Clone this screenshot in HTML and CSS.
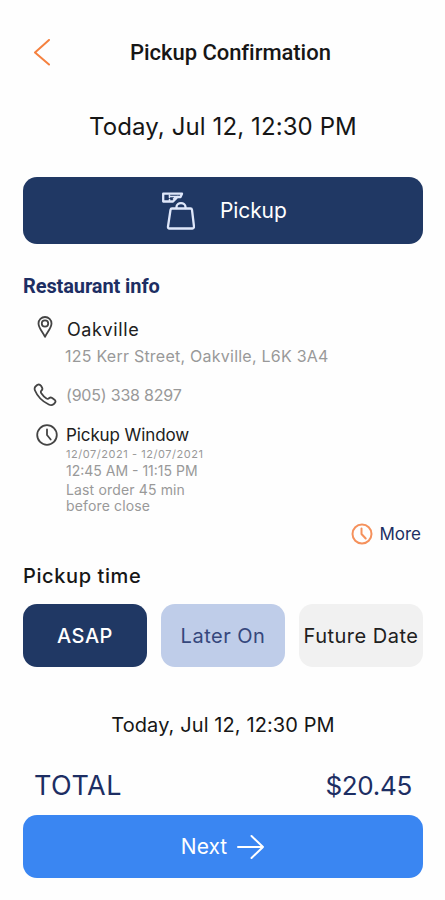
FILE: index.html
```html
<!DOCTYPE html>
<html lang="en">
<head>
  <meta charset="UTF-8" />
  <meta name="viewport" content="width=device-width, initial-scale=1" />
  <title>Pickup Confirmation</title>
  <link rel="stylesheet" href="styles.css">
</head>
<body>
  <header class="top-bar">
    <button class="back-btn" aria-label="Back">
      <svg width="18" height="28" viewBox="0 0 18 28"><path d="M16 1L2 13.500L16 25.500" /></svg>
    </button>
    <h1>Pickup Confirmation</h1>
  </header>

  <main>
    <p class="date-large"><span>Today, Jul 12, 12:30 PM</span></p>

    <button class="pickup-btn">
      <svg class="bag-icon" width="34" height="40" viewBox="0 0 34 40">
        <path d="M2.200 2.700H21L19.500 6H16.500L12 10.500H2.200Z" />
        <path class="fingers" d="M8.500 4V6.500M8.500 8.500V9.500M10 5.500H17M12.500 8L15 5.500" />
        <path d="M15.500 17V16C15.500 10.800 24.500 10.800 24.500 16V17" />
        <path d="M11 17.500H29.500Q30.800 17.500 31 18.800L33 35.500Q33 37.500 31.500 37.500H8.500Q6.800 37.500 7 35.500L9.500 18.800Q9.700 17.500 11 17.500Z" />
      </svg>
      <span>Pickup</span>
    </button>

    <!-- Restaurant info -->
    <h2 class="info-title">Restaurant info</h2>
    <section class="info">
      <div class="info-row place">
        <svg class="pin-icon" width="16" height="22" viewBox="0 0 16 22">
          <path d="M8 20.800C6 16.500 1.500 12 1.500 7.500A6.500 6.500 0 0 1 14.500 7.500C14.500 12 10 16.500 8 20.800Z" />
          <circle cx="8" cy="7.500" r="3.200" />
        </svg>
        <div>
          <p class="name oakville">Oakville</p>
          <p class="address">125 Kerr Street, Oakville, L6K 3A4</p>
        </div>
      </div>
      <div class="info-row phone">
        <svg class="phone-icon" width="24" height="24" viewBox="0 0 24 24">
          <path d="M2.500 3.500L4.500 1.800Q6.500 .8 8 2.800L9 4.500Q10 6.300 8.500 7.500Q7.300 8.500 8.300 10.200Q10.500 13.500 13.500 15.500Q15 16.300 16.300 15Q17.500 14 19.200 15L21.500 16.700Q23.300 18.300 21.800 20L20.500 21.300Q18.500 23 15.800 21.500C9.500 18.500 4.500 13.500 2 7.500Q1 5 2.500 3.500Z" />
        </svg>
        <p class="number">(905) 338 8297</p>
      </div>
      <div class="info-row window">
        <svg class="clock-icon" width="22" height="22" viewBox="0 0 22 22">
          <circle cx="11" cy="11" r="9.800" />
          <path d="M11 5.500V11L14.700 15.500" />
        </svg>
        <div>
          <p class="name window-title">Pickup Window</p>
          <p class="dates">12/07/2021 - 12/07/2021</p>
          <p class="hours">12:45 AM - 11:15 PM</p>
          <p class="last-order">Last order 45 min<br>before close</p>
        </div>
      </div>
    </section>

    <a class="more">
      <svg width="22" height="22" viewBox="0 0 22 22">
        <circle cx="11" cy="11" r="9.500" />
        <path d="M10.500 5.500V11L14.700 15.500" />
      </svg>
      <span>More</span>
    </a>

    <!-- Pickup time -->
    <h2 class="time-title">Pickup time</h2>
    <div class="time-options">
      <button class="option active">ASAP</button>
      <button class="option later">Later On</button>
      <button class="option future">Future Date</button>
    </div>
    <p class="date-small"><span>Today, Jul 12, 12:30 PM</span></p>

    <div class="total">
      <span class="total-label">TOTAL</span>
      <span class="total-price">$20.45</span>
    </div>
    <button class="next-btn">
      <span>Next</span>
      <svg width="28" height="26" viewBox="0 0 28 26"><path d="M1 13H26M14.500 2L26 13L14.500 24" /></svg>
    </button>
  </main>
</body>
</html>
```
FILE: styles.css
```css
* {
  box-sizing: border-box;
  margin: 0;
  padding: 0;
}

body {
  width: 445px;
  height: 900px;
  overflow: hidden;
  background: #fefefe;
  color: #161616;
  font-family: Inter, 'Liberation Sans', sans-serif;
  white-space: nowrap;
}

button {
  border: none;
  font-family: inherit;
  cursor: pointer;
}

svg {
  flex: none;
  fill: none;
  stroke: currentColor;
  stroke-linecap: round;
  stroke-linejoin: round;
}

.top-bar {
  display: flex;
  align-items: center;
  height: 105px;
  padding-left: 33px;
}

.back-btn {
  width: 97px;
  height: 28px;
  background: none;
  color: #f5813f;
  text-align: left;
}

.back-btn svg {
  display: block;
  stroke-width: 2;
}

h1 {
  padding-top: 1px;
  font: 500 22px/28px Roboto, sans-serif;
  letter-spacing: -0.04px;
}

main {
  padding: 0 22px 0 23px;
}

.date-large {
  height: 72px;
  font-size: 24px;
  line-height: 43px;
  letter-spacing: 0.1px;
  text-align: center;
}

.pickup-btn {
  display: flex;
  align-items: center;
  width: 100%;
  height: 67px;
  padding-left: 138px;
  gap: 25px;
  border-radius: 14px;
  background: #203864;
  color: #fff;
  font-size: 21px;
  letter-spacing: -0.1px;
}

.bag-icon {
  color: #dfe7fa;
  stroke-width: 2.3;
}

.fingers {
  stroke-width: 1.6;
}

.info-title {
  margin-top: 29px;
  color: #1d2e63;
  font: 700 20px/26px Roboto, sans-serif;
  letter-spacing: -0.1px;
}

.info {
  padding-left: 11px;
  color: #999;
}

.info-row {
  display: flex;
}

.name {
  color: #202020;
}

.info-row svg {
  color: #444;
  stroke-width: 1.8;
}

.place {
  padding-top: 17px;
  height: 79px;
}

.pin-icon {
  margin: 0 13px 0 3px;
}

.oakville {
  padding-left: 1px;
  font-size: 18px;
  line-height: 27px;
  letter-spacing: 0.6px;
}

.address {
  margin-left: -1px;
  font-size: 16px;
  line-height: 27px;
  letter-spacing: 0.24px;
}

.phone {
  height: 42px;
}

.phone-icon {
  margin: 5px 9px 0 -1px;
}

.number {
  font-size: 16px;
  line-height: 34px;
  letter-spacing: -0.2px;
}

.clock-icon {
  margin: 4px 8px 0 2px;
}

.window-title {
  font-size: 17px;
  line-height: 30px;
  letter-spacing: -0.1px;
}

.dates {
  font-size: 11px;
  line-height: 9px;
  letter-spacing: 0.54px;
}

.hours {
  font-size: 14px;
  line-height: 23px;
}

.last-order {
  font-size: 14px;
  line-height: 16px;
  letter-spacing: 0.15px;
}

.more {
  display: flex;
  justify-content: flex-end;
  align-items: center;
  height: 39px;
  padding-right: 2px;
  gap: 6px;
  color: #1d2e63;
  font-size: 17px;
}

.more svg {
  color: #f5915c;
  stroke-width: 2;
}

.time-title {
  height: 51px;
  font-size: 20px;
  font-weight: 500;
  line-height: 46px;
  letter-spacing: 0.6px;
}

.time-options {
  display: grid;
  grid-template-columns: repeat(3, 124px);
  justify-content: space-between;
}

.option {
  height: 63px;
  border-radius: 14px;
  background: #f1f1f1;
  color: #202020;
  font-size: 20px;
  letter-spacing: 0.5px;
}

.option.active {
  background: #203864;
  color: #fff;
  font-weight: 500;
}

.option.later {
  background: #bfcde9;
  color: #35477c;
}

.date-small {
  height: 92px;
  padding-top: 44px;
  font-size: 20px;
  line-height: 28px;
  letter-spacing: 0.1px;
  text-align: center;
}

.total {
  display: flex;
  justify-content: space-between;
  height: 56px;
  padding: 6px 11px 0;
  color: #1d2e63;
  font-size: 26px;
  line-height: 42px;
}

.total-label {
  font-size: 27px;
  letter-spacing: 0.5px;
}

.total-price {
  letter-spacing: -0.3px;
}

.next-btn {
  display: flex;
  justify-content: center;
  align-items: center;
  width: 100%;
  height: 63px;
  gap: 10px;
  border-radius: 14px;
  background: #3a86f2;
  color: #fff;
  font-size: 21px;
}

.next-btn svg {
  stroke-width: 2;
}
```
